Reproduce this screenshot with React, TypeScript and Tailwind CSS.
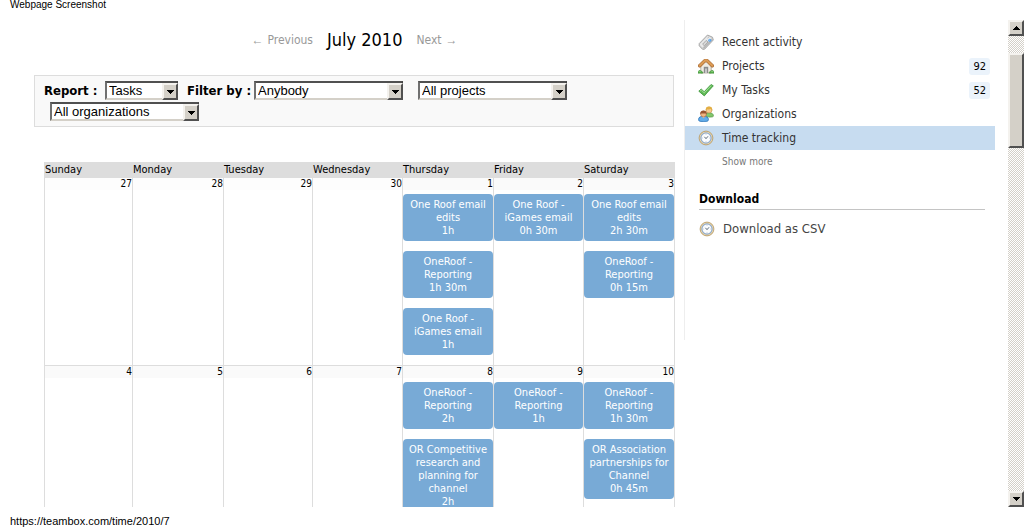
import React from "react";

type Entry = { title: string; time: string };
type Day = { date: number; muted?: boolean; entries?: Entry[] };

const weekdays = ["Sunday", "Monday", "Tuesday", "Wednesday", "Thursday", "Friday", "Saturday"];

const weeks: Day[][] = [
  [
    { date: 27, muted: true },
    { date: 28, muted: true },
    { date: 29, muted: true },
    { date: 30, muted: true },
    {
      date: 1,
      entries: [
        { title: "One Roof email edits", time: "1h" },
        { title: "OneRoof - Reporting", time: "1h 30m" },
        { title: "One Roof - iGames email", time: "1h" },
      ],
    },
    { date: 2, entries: [{ title: "One Roof - iGames email", time: "0h 30m" }] },
    {
      date: 3,
      entries: [
        { title: "One Roof email edits", time: "2h 30m" },
        { title: "OneRoof - Reporting", time: "0h 15m" },
      ],
    },
  ],
  [
    { date: 4 },
    { date: 5 },
    { date: 6 },
    { date: 7 },
    {
      date: 8,
      entries: [
        { title: "OneRoof - Reporting", time: "2h" },
        { title: "OR Competitive research and planning for channel", time: "2h" },
      ],
    },
    { date: 9, entries: [{ title: "OneRoof - Reporting", time: "1h" }] },
    {
      date: 10,
      entries: [
        { title: "OneRoof - Reporting", time: "1h 30m" },
        { title: "OR Association partnerships for Channel", time: "0h 45m" },
      ],
    },
  ],
];

function TagIcon() {
  return (
    <svg className="size-4 shrink-0" viewBox="0 0 16 16" aria-hidden="true">
      <path d="M9.5 1 14.5 3.2 15.3 6 6.5 15.3 4.5 15.3 1.2 11.8 1.2 9.6Z" fill="#d2d2d2" stroke="#a2a2a2" strokeWidth="0.9" strokeLinejoin="round" />
      <path d="M9.7 2.1 13.5 3.9 4.3 13.4 2 11V9.9Z" fill="#e9e9e9" />
      <path d="M14 4.7 14.6 6 6.2 14.7 4.9 14Z" fill="#b6b6b6" />
      <path d="M4.6 10.2 8.2 6.4 10 8 6.4 11.8Z" fill="#d8d8d8" stroke="#9d9d9d" strokeWidth="0.8" />
      <path d="M9.4 4.2 11 2.9" stroke="#b0b0b0" strokeWidth="0.8" />
      <circle cx="11.8" cy="6.2" r="1.5" fill="#58a5ee" />
      <circle cx="11.5" cy="6" r="0.6" fill="#a7d2fb" />
    </svg>
  );
}

function HouseIcon() {
  return (
    <svg className="size-4 shrink-0" viewBox="0 0 16 16" aria-hidden="true">
      <path d="M2.8 7.2 8 3.4l5.2 3.8V15H2.8Z" fill="#efebe2" stroke="#a09882" strokeWidth="0.7" />
      <path d="M5.8 15V8.8h4.4V15Z" fill="#8c8c8c" />
      <path d="M7 15v-4.6h2V15Z" fill="#c5c5c5" />
      <path d="M1.7 7.8 6.9 2.6h2.2l5.2 5.2" fill="none" stroke="#a1622d" strokeWidth="3.4" strokeLinejoin="round" strokeLinecap="round" />
      <path d="M1.7 7.6 7 2.5h2l5.3 5.1" fill="none" stroke="#dc9b55" strokeWidth="2.3" strokeLinejoin="round" strokeLinecap="round" />
      <path d="M0 15.2v-1.5l1-1.2 1.6.1L4.7 14v1.2ZM16 15.2v-1.5l-1-1.2-1.6.1L11.3 14v1.2Z" fill="#57ad4c" stroke="#3a8a35" strokeWidth="0.5" />
      <path d="M.7 13.6h2.1M13.2 13.6h2" stroke="#91d780" strokeWidth="0.8" />
    </svg>
  );
}

function TickIcon() {
  return (
    <svg className="size-4 shrink-0" viewBox="0 0 16 16" aria-hidden="true">
      <path d="M.8 9.2 3.2 7l3 2.7L13 2.5l2.3 1.3-9 10.1Z" fill="#61b957" stroke="#3b963a" strokeWidth="0.8" strokeLinejoin="round" />
      <path d="m2 9.1 1.3-1 2.9 2.8 7.1-7.4" fill="none" stroke="#9cdd8f" strokeWidth="1" />
    </svg>
  );
}

function PeopleIcon() {
  return (
    <svg className="size-4 shrink-0" viewBox="0 0 16 16" aria-hidden="true">
      <path d="M6.8 9.7c.2-2.2 1.5-3 4-3 2.9 0 4.6 1.1 4.6 3.1 0 1-.8 1.3-4.6 1.3Z" fill="#82c66b" stroke="#519342" strokeWidth="0.7" />
      <circle cx="11" cy="4" r="3" fill="#f6c990" stroke="#bd8339" strokeWidth="0.5" />
      <path d="M7.8 4.7C7.3 1.8 8.6.4 11 .4s3.7 1.4 3.2 4.3c-.8-.4-1.1-.8-1.4-1.6-1.3.6-2.6.5-3.6.2-.3.6-.8 1-1.4 1.4Z" fill="#e3af43" />
      <path d="M.6 13.7c0-2.4 1.4-3.4 4.8-3.4 3.5 0 5 1 5 3.4 0 1.5-1.3 1.8-5 1.8-3.6 0-4.8-.3-4.8-1.8Z" fill="#63ade9" stroke="#236eb5" strokeWidth="0.8" />
      <path d="M4 10.6 5.5 12.2 7 10.6" fill="#f4c490" />
      <circle cx="5.5" cy="8" r="2.9" fill="#efb582" stroke="#a86138" strokeWidth="0.5" />
      <path d="M2.3 8.4C2 5.8 3.3 4.6 5.5 4.6s3.5 1.3 3.2 3.8c-.8-.4-1-.7-1.3-1.2-1.3.5-2.6.4-3.9 0-.3.6-.5.8-1.2 1.2Z" fill="#98542f" />
    </svg>
  );
}

function ClockIcon() {
  return (
    <svg className="size-4 shrink-0" viewBox="0 0 16 16" aria-hidden="true">
      <circle cx="8" cy="8" r="6.9" fill="#ecd9ad" stroke="#b3945f" strokeWidth="0.8" />
      <circle cx="8" cy="8" r="5.1" fill="#fbfdff" stroke="#8fabcd" strokeWidth="1.2" />
      <path d="M8 3.8v.9M8 11.3v.9M3.8 8h.9M11.3 8h.9" stroke="#a9b8c9" strokeWidth="0.8" />
      <path d="M6.4 6.8 8 8.7 10 6.3" fill="none" stroke="#5d6b7b" strokeWidth="1" />
    </svg>
  );
}

function DropDown({ label, options, width, caption, captionWidth }: {
  label: string;
  options: string[];
  width: string;
  caption?: string;
  captionWidth?: string;
}) {
  const id = React.useId();
  return (
    <div className="flex h-[21px] items-start">
      {caption && (
        <label htmlFor={id} className={`${captionWidth} text-[13px] leading-5 font-bold whitespace-nowrap text-black`}>
          {caption}
        </label>
      )}
      <span className={`relative ml-1.5 block ${width}`}>
        <select
          id={id}
          aria-label={caption ? undefined : label}
          className="block h-[19px] w-full appearance-none rounded-none border-2 border-t-[#505050] border-r-[#404040] border-b-[#d4d0c8] border-l-[#707070] bg-white pr-4 pl-0.5 font-['Liberation_Sans',sans-serif] text-[13px] leading-[15px] text-black"
        >
          {options.map((o) => (
            <option key={o}>{o}</option>
          ))}
        </select>
        <span className="pointer-events-none absolute top-0.5 right-0 flex h-[17px] w-4 items-center justify-center border-2 border-t-[#f4f2ee] border-r-[#505050] border-b-[#505050] border-l-[#f4f2ee] bg-[#d4d0c8]">
          <svg className="h-1 w-[7px]" viewBox="0 0 7 4" aria-hidden="true" shapeRendering="crispEdges">
            <path d="M0 0h7v1H6v1H5v1H4v1H3V3H2V2H1V1H0Z" />
          </svg>
        </span>
      </span>
    </div>
  );
}

function SideItem({ icon, text, count, active }: {
  icon: React.ReactNode;
  text: string;
  count?: number;
  active?: boolean;
}) {
  return (
    <li>
      <a href="#" className={`flex h-6 items-center gap-2 pr-[5px] pl-[13px] text-[12px] text-[#333] ${active ? "bg-[#c7dcf0]" : ""}`}>
        {icon}
        <span>{text}</span>
        {count !== undefined && (
          <span className="ml-auto rounded-[3px] bg-[#ebf3fb] px-1 text-[11px] leading-[17px] text-black">{count}</span>
        )}
      </a>
    </li>
  );
}

function ScrollButton({ down }: { down?: boolean }) {
  return (
    <button
      type="button"
      aria-label={down ? "Scroll down" : "Scroll up"}
      className="flex h-4 w-full shrink-0 items-center justify-center border-2 border-t-[#f4f2ee] border-r-[#505050] border-b-[#505050] border-l-[#f4f2ee] bg-[#d4d0c8]"
    >
      <svg className="h-1 w-[7px]" viewBox="0 0 7 4" aria-hidden="true" shapeRendering="crispEdges">
        <path d={down ? "M0 0h7v1H6v1H5v1H4v1H3V3H2V2H1V1H0Z" : "M3 0h1v1h1v1h1v1h1v1H0V3h1V2h1V1h1Z"} />
      </svg>
    </button>
  );
}

function Calendar() {
  return (
    <table className="w-full table-fixed border-separate border-spacing-0 text-[11px] text-black">
      <colgroup>
        <col className="w-[88px]" />
        <col className="w-[91px]" />
        <col className="w-[89px]" />
        <col className="w-[90px]" />
        <col className="w-[91px]" />
        <col className="w-[90px]" />
        <col className="w-[92px]" />
      </colgroup>
      <thead>
        <tr>
          {weekdays.map((d) => (
            <th key={d} scope="col" className="h-4 bg-[#ddd] p-0 pl-px text-left leading-4 font-normal">
              {d}
            </th>
          ))}
        </tr>
      </thead>
      <tbody>
        {weeks.map((week, i) => (
          <tr key={i}>
            {week.map((day) => (
              <td key={day.date} className={`border-l border-[#ddd] p-0 align-top last:border-r ${i > 0 ? "border-t" : ""}`}>
                <div className={`mb-1 h-3 text-right text-[10px] leading-3 ${day.muted ? "bg-[#fdfdfd]" : "bg-[#fafafa]"}`}>
                  {day.date}
                </div>
                {day.entries?.map((e, k) => (
                  <div key={k} className="mb-2.5 rounded-[4px] bg-[#78aad6] px-1 py-1 text-center leading-[13px] text-white">
                    <p>{e.title}</p>
                    <p>{e.time}</p>
                  </div>
                ))}
              </td>
            ))}
          </tr>
        ))}
      </tbody>
    </table>
  );
}

export default function App() {
  return (
    <div className="flex h-screen flex-col overflow-hidden bg-white font-['DejaVu_Sans_Condensed','DejaVu_Sans',sans-serif]">
      <header className="h-5 shrink-0 pl-2.5 font-['Liberation_Sans',sans-serif] text-[10px] leading-[10px] text-black">
        Webpage Screenshot
      </header>

      <div className="flex min-h-0 flex-1 overflow-hidden">
        <main className="min-w-0 flex-1 overflow-hidden pr-[9px] pl-[34px]">
          <nav className="flex items-center justify-center gap-3.5 pt-2 pb-[23px] text-[12px] leading-6 text-[#999]">
            <a href="#" className="flex gap-1">
              <span className="font-['Liberation_Sans',sans-serif]">←</span>
              Previous
            </a>
            <h1 className="text-[18px] text-black">July 2010</h1>
            <a href="#" className="flex gap-1">
              Next
              <span className="font-['Liberation_Sans',sans-serif]">→</span>
            </a>
          </nav>

          <form className="mr-px flex flex-wrap gap-x-[9px] border border-[#ddd] bg-[#f9f9f9] px-[9px] pt-[5px] pb-[3px]">
            <DropDown caption="Report :" captionWidth="w-[55px]" label="Report" width="w-[73px]" options={["Tasks", "Hours"]} />
            <DropDown caption="Filter by :" captionWidth="w-[61px]" label="Person" width="w-[149px]" options={["Anybody"]} />
            <DropDown label="Project" width="w-[149px]" options={["All projects"]} />
            <DropDown label="Organization" width="w-[149px]" options={["All organizations"]} />
          </form>

          <div className="mt-[35px] ml-2.5">
            <Calendar />
          </div>
        </main>

        <aside className="mr-[13px] min-h-80 w-[311px] shrink-0 self-start border-l border-[#eee] pt-2.5">
          <ul>
            <SideItem icon={<TagIcon />} text="Recent activity" />
            <SideItem icon={<HouseIcon />} text="Projects" count={92} />
            <SideItem icon={<TickIcon />} text="My Tasks" count={52} />
            <SideItem icon={<PeopleIcon />} text="Organizations" />
            <SideItem icon={<ClockIcon />} text="Time tracking" active />
          </ul>
          <a href="#" className="ml-[37px] block text-[10px] leading-6 text-[#777]">
            Show more
          </a>
          <section className="mr-2.5 ml-3.5">
            <h2 className="mt-4 border-b border-[#c4c4c4] text-[12px] leading-[19px] font-bold text-black">Download</h2>
            <a href="#" className="mt-[7px] flex h-6 items-center gap-2 text-[13px] text-[#444]">
              <ClockIcon />
              Download as CSV
            </a>
          </section>
        </aside>

        <div className="flex w-4 shrink-0 flex-col bg-[repeating-conic-gradient(#d4d0c8_0_25%,#fff_0_50%)] bg-[length:2px_2px]">
          <ScrollButton />
          <div className="mt-[17px] h-[95px] border-2 border-t-[#f4f2ee] border-r-[#505050] border-b-[#505050] border-l-[#f4f2ee] bg-[#d4d0c8]" />
          <div className="flex-1" />
          <ScrollButton down />
        </div>
      </div>

      <footer className="h-5 shrink-0 pt-2 pl-2.5 font-['Liberation_Sans',sans-serif] text-[11px] leading-3 text-black">
        https://teambox.com/time/2010/7
      </footer>
    </div>
  );
}
